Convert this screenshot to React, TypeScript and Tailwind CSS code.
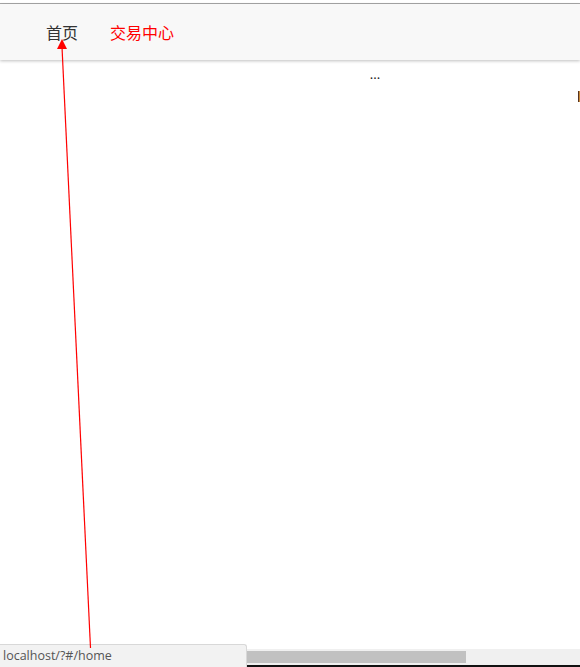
import React from "react";

export default function App() {
  return (
    <div className="relative w-[580px] h-[667px] overflow-hidden bg-white flex flex-col" style={{ fontFamily: '"Noto Sans", "Noto Sans CJK SC", sans-serif' }}>
      <div className="h-[3px] bg-white" />
      <div className="h-[1px] bg-[#a8a8a8]" />
      <nav className="h-[56px] bg-[#f8f8f8] flex items-center pl-[46px] gap-[32px] text-[16px] leading-none shadow-[0_1px_3px_rgba(0,0,0,0.25)] relative z-10" style={{ fontFamily: '"Noto Sans CJK SC", sans-serif' }}>
        <span className="text-[#333]">首页</span>
        <span className="text-[#ff0000]">交易中心</span>
      </nav>
      <main className="flex-1 relative">
        <div className="flex justify-center pt-[8px] pl-[170px] text-[13px] leading-none text-[#222]">...</div>
        <div className="flex justify-end pt-[10px]">
          <span className="w-[2px] h-[11px] bg-[#c98a3a] border-l border-[#553322]" />
        </div>
      </main>
      <div className="h-[16px] bg-[#f0f0f0] flex items-center">
        <div className="ml-[247px] w-[219px] h-[12px] bg-[#c1c1c1]" />
      </div>
      <div className="h-[2px] bg-[#111]" />

      <div className="absolute left-0 bottom-0 w-[247px] h-[23px] bg-[#f2f2f2] border-t border-r border-[#d8d8d8] rounded-tr-[3px] flex items-center pl-[3px] text-[12.5px] text-[#555]" style={{ fontFamily: '"Open Sans", "Noto Sans", sans-serif' }}>
        localhost/?#/home
      </div>

      <svg className="absolute left-0 top-0 z-20 pointer-events-none" width="580" height="667">
        <line x1="62" y1="47" x2="90.5" y2="648" stroke="#ff0000" strokeWidth="1.2" />
        <polygon points="62,39 57,49 67,49" fill="#ff0000" />
      </svg>
    </div>
  );
}
